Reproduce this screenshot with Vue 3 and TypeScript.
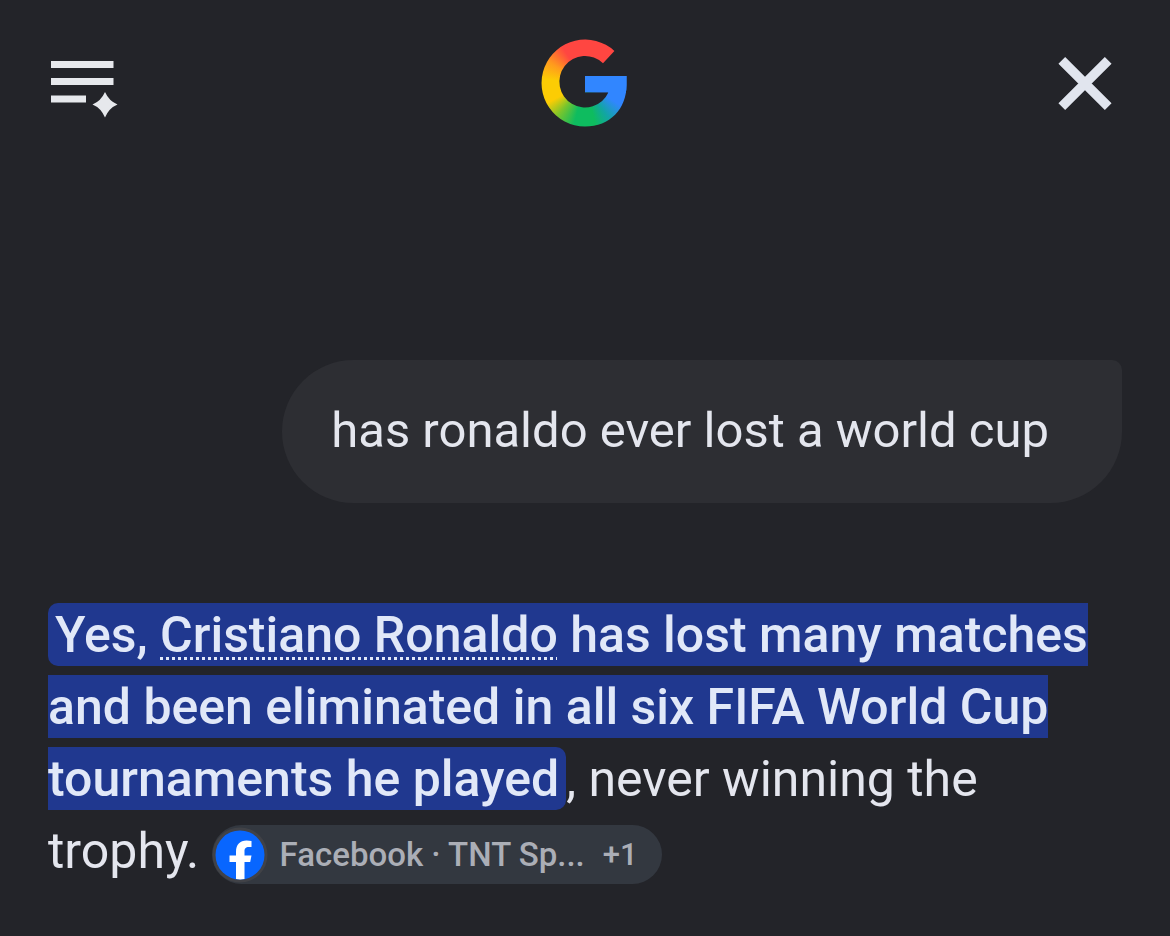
<script setup lang="ts">
const query: string = 'has ronaldo ever lost a world cup'
const source = { label: 'Facebook · TNT Sp...', extra: '+1' }
</script>

<template>
  <div class="page">
    <header class="bar">
      <button class="icon-button" type="button" aria-label="Search history">
        <svg width="68" height="74" viewBox="0 -14 68 74" aria-hidden="true">
          <path d="M1 1H63.5V8H1zM1 18H63.5V25H1zM1 35.500H36V42.500H1z" fill="#e6e8ec" />
          <path d="M55 32Q59 41 67.500 44.500Q59 48 55 57.500Q51 48 42.500 44.500Q51 41 55 32z" fill="#e6e8ec" />
        </svg>
      </button>
      <a class="logo" href="#" aria-label="Google"><span class="mark"></span></a>
      <button class="icon-button" type="button" aria-label="Close">
        <svg width="70" height="56" viewBox="-7 0 70 56" aria-hidden="true">
          <path d="M4.800 5.300L51.200 51.700M51.200 5.300L4.800 51.700" stroke="#e1e5ee" stroke-width="9.500" />
        </svg>
      </button>
    </header>

    <main class="chat">
      <p class="query">{{ query }}</p>
      <p class="answer">
        <mark class="highlight">Yes, <a class="entity" href="#">Cristiano Ronaldo</a> has lost many matches and been eliminated in all six FIFA World Cup tournaments he played</mark>, never winning the trophy.
        <button class="source" type="button">
          <svg class="favicon" width="56" height="56" viewBox="0 0 56 56" aria-hidden="true">
            <circle cx="28" cy="28" r="27.500" fill="#414247" />
            <circle cx="28" cy="28" r="24.500" fill="#0866ff" />
            <path d="M24 52V35H17.500V28.500H24V25C24 17.500 28 13.500 34.500 13.500C36.500 13.500 38 13.700 39.500 14V20H37C33.500 20 32.500 21.700 32.500 24.300V28.500H39.500L38.200 35H32.500V52Q28 52.800 24 52z" fill="#fff" />
          </svg>
          <span>{{ source.label }}</span>
          <span class="extra">{{ source.extra }}</span>
        </button>
      </p>
    </main>
  </div>
</template>

<style>
body {
  margin: 0;
  background: #232429;
}
</style>

<style scoped>
.page {
  min-height: 100vh;
  box-sizing: border-box;
  padding: 39px 48px 48px;
  background: #232429;
  color: #e4e6ee;
  font-family: Roboto, "Open Sans", sans-serif;
  font-size: 49px;
  line-height: 72px;
}

.bar {
  display: grid;
  grid-template-columns: 1fr auto 1fr;
  align-items: center;
  padding: 0 2px;
}

.icon-button {
  display: flex;
  justify-self: start;
  padding: 0;
  border: 0;
  background: none;
  cursor: pointer;
}

.icon-button:last-child {
  justify-self: end;
}

.logo {
  display: block;
}

.mark {
  display: block;
  position: relative;
  width: 88px;
  height: 88px;
  background: conic-gradient(from 0deg at 44px 44px, #ff4641 0deg 62deg, #3186ff 64deg 122deg, #12a5a5 146deg, #0ebc5f 166deg 195deg, #7ac52c 220deg, #fccc04 242deg 275deg, #ff9b1d 300deg, #ff4641 328deg 360deg);
  clip-path: path("M73.400 11.900A43.500 43.500 0 1 0 44 87.500C69 87.500 85.500 70 85.500 46V37H44V53.300H67.500A25.700 25.700 0 1 1 62 24.300Z");
}

.mark::after {
  content: "";
  position: absolute;
  top: 34px;
  left: 42px;
  width: 46px;
  height: 20px;
  background: #3186ff;
}

.chat {
  display: flex;
  flex-direction: column;
  gap: 96px;
  padding-top: 233px;
}

.query {
  align-self: flex-end;
  margin: 0;
  padding: 35px 73px 36px 49px;
  border-radius: 72px 10px 72px 72px;
  background: #2d2e33;
}

.answer {
  margin: 0;
  font-size: 50px;
}

.highlight {
  padding: 3px 7px 2px;
  border-radius: 10px;
  background: #20388f;
  color: #e1e8f8;
  font-weight: 500;
}

.entity {
  color: inherit;
  text-decoration: underline dotted 3px;
  text-decoration-skip-ink: none;
  text-underline-offset: 5px;
}

.source {
  display: inline-flex;
  align-items: center;
  height: 59px;
  padding: 0 24px 0 0;
  border: 0;
  border-radius: 30px;
  background: #333840;
  color: #abaeb6;
  font: 500 33px/59px Roboto, "Open Sans", sans-serif;
  vertical-align: middle;
  cursor: pointer;
}

.favicon {
  margin-right: 12px;
}

.extra {
  margin-left: 18px;
  font-size: 31px;
}
</style>
